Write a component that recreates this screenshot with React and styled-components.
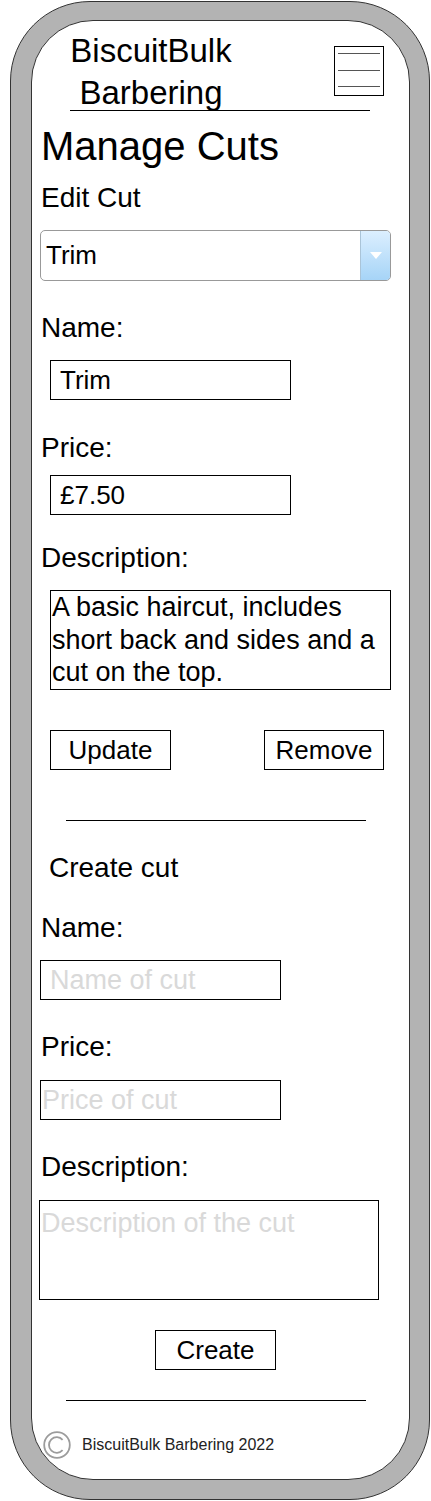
import React from "react";
import styled, { createGlobalStyle } from "styled-components";

const GlobalStyle = createGlobalStyle`
  body {
    margin: 0;
    background: #fff;
    font-family: "Liberation Sans", Arial, sans-serif;
    color: #000;
  }
`;

const Phone = styled.div`
  box-sizing: border-box;
  width: 420px;
  height: 1499px;
  margin: 1px 0 0 10px;
  padding: 18px 19px 19px 20px;
  background: #b3b3b3;
  border: 1px solid #333;
  border-radius: 80px;
  display: flex;
`;

const Screen = styled.div`
  flex: 1;
  box-sizing: border-box;
  background: #fff;
  border: 1px solid #333;
  border-radius: 62px;
  padding-left: 8px;
  display: flex;
  flex-direction: column;
  align-items: flex-start;
`;

const HeaderRow = styled.div`
  display: flex;
  justify-content: space-between;
  align-items: flex-start;
  width: 319px;
  height: 80px;
  margin: 9px 0 0 25px;
`;

const Brand = styled.div`
  width: 172px;
  text-align: center;
  font-size: 33px;
  line-height: 42px;
`;

const Menu = styled.div`
  box-sizing: border-box;
  width: 50px;
  height: 50px;
  margin-top: 16px;
  border: 1px solid #000;
  padding: 6px 3px 8px;
  display: flex;
  flex-direction: column;
  justify-content: space-between;
`;

const MenuLine = styled.span`
  display: block;
  height: 1px;
  background: #555;
`;

const Rule = styled.div`
  height: 1px;
  background: #000;
  width: ${(p) => p.$w || 300}px;
  margin: ${(p) => p.$mt || 0}px 0 0 ${(p) => p.$ml || 0}px;
`;

const PageTitle = styled.h1`
  margin: 13px 0 0 1px;
  font-size: 40px;
  line-height: 44px;
  font-weight: normal;
`;

const SectionTitle = styled.h2`
  margin: ${(p) => p.$mt}px 0 0 ${(p) => p.$ml}px;
  font-size: 28px;
  line-height: 32px;
  font-weight: normal;
`;

const Label = styled.label`
  display: block;
  margin: ${(p) => p.$mt}px 0 0 1px;
  font-size: 28px;
  line-height: 32px;
`;

const SelectBox = styled.div`
  box-sizing: border-box;
  display: flex;
  width: 351px;
  height: 51px;
  margin-top: 16px;
  border: 1px solid #999;
  border-radius: 5px;
  overflow: hidden;
`;

const SelectValue = styled.div`
  flex: 1;
  padding-left: 5px;
  font-size: 26px;
  line-height: 49px;
`;

const SelectArrow = styled.div`
  width: 29px;
  border-left: 1px solid #aac4d8;
  background: linear-gradient(#dcefff, #a6d4f7);
  display: flex;
  align-items: center;
  justify-content: center;

  &::after {
    content: "";
    border-left: 6px solid transparent;
    border-right: 6px solid transparent;
    border-top: 7px solid #fff;
  }
`;

const TextBox = styled.input`
  box-sizing: border-box;
  width: ${(p) => p.$w}px;
  height: 40px;
  margin: ${(p) => p.$mt}px 0 0 ${(p) => p.$ml}px;
  padding: 0 0 0 ${(p) => p.$pl}px;
  border: 1px solid #000;
  border-radius: 0;
  outline: none;
  font-family: inherit;
  font-size: ${(p) => p.$fs || 26}px;
  color: #000;
  background: #fff;

  &::placeholder {
    color: #d9d9d9;
  }
`;

const TextArea = styled.textarea`
  box-sizing: border-box;
  display: block;
  width: ${(p) => p.$w}px;
  height: 100px;
  margin: ${(p) => p.$mt}px 0 0 ${(p) => p.$ml}px;
  padding: ${(p) => p.$pt}px 0 0 1px;
  border: 1px solid #000;
  border-radius: 0;
  outline: none;
  resize: none;
  overflow: hidden;
  font-family: inherit;
  font-size: 27px;
  line-height: 32.5px;
  color: #000;
  background: #fff;

  &::placeholder {
    color: #d9d9d9;
  }
`;

const ButtonRow = styled.div`
  display: flex;
  justify-content: space-between;
  width: 334px;
  margin: 40px 0 0 10px;
`;

const Button = styled.button`
  box-sizing: border-box;
  width: ${(p) => p.$w}px;
  height: 40px;
  margin-left: ${(p) => p.$ml || 0}px;
  margin-top: ${(p) => p.$mt || 0}px;
  padding: 0;
  border: 1px solid #000;
  border-radius: 0;
  background: #fff;
  color: #000;
  font-family: inherit;
  font-size: 26px;
`;

const Footer = styled.footer`
  display: flex;
  align-items: center;
  height: 28px;
  margin: 30px 0 0 3px;
`;

const FooterText = styled.span`
  margin-left: 11px;
  font-size: 16px;
  line-height: 28px;
  color: #222;
`;

const CopyrightIcon = () => (
  <svg width="28" height="28" viewBox="0 0 28 28">
    <circle cx="14" cy="14" r="12.8" fill="none" stroke="#9c9c9c" strokeWidth="1.8" />
    <path
      d="M19.6 8.8 A7.8 7.8 0 1 0 19.6 19.2"
      fill="none"
      stroke="#9c9c9c"
      strokeWidth="1.8"
    />
  </svg>
);

export default function App() {
  return (
    <>
      <GlobalStyle />
      <Phone>
        <Screen>
          <HeaderRow>
            <Brand>
              BiscuitBulk
              <br />
              Barbering
            </Brand>
            <Menu>
              <MenuLine />
              <MenuLine />
              <MenuLine />
            </Menu>
          </HeaderRow>
          <Rule $ml={30} />

          <PageTitle>Manage Cuts</PageTitle>
          <SectionTitle $mt={14} $ml={1}>Edit Cut</SectionTitle>
          <SelectBox>
            <SelectValue>Trim</SelectValue>
            <SelectArrow />
          </SelectBox>

          <Label $mt={31}>Name:</Label>
          <TextBox $w={241} $mt={16} $ml={10} $pl={9} defaultValue="Trim" />
          <Label $mt={32}>Price:</Label>
          <TextBox $w={241} $mt={11} $ml={10} $pl={9} defaultValue="£7.50" />
          <Label $mt={27}>Description:</Label>
          <TextArea
            $w={341}
            $mt={16}
            $ml={10}
            $pt={0}
            defaultValue="A basic haircut, includes short back and sides and a cut on the top."
          />

          <ButtonRow>
            <Button $w={121}>Update</Button>
            <Button $w={120}>Remove</Button>
          </ButtonRow>

          <Rule $mt={50} $ml={26} />

          <SectionTitle $mt={31} $ml={9}>Create cut</SectionTitle>
          <Label $mt={28}>Name:</Label>
          <TextBox $w={241} $mt={16} $ml={0} $pl={9} $fs={27} placeholder="Name of cut" />
          <Label $mt={31}>Price:</Label>
          <TextBox $w={241} $mt={17} $ml={0} $pl={1} $fs={27} placeholder="Price of cut" />
          <Label $mt={31}>Description:</Label>
          <TextArea
            $w={340}
            $mt={17}
            $ml={-1}
            $pt={6}
            placeholder="Description of the cut"
          />

          <Button $w={121} $mt={30} $ml={115}>Create</Button>

          <Rule $mt={30} $ml={26} />

          <Footer>
            <CopyrightIcon />
            <FooterText>BiscuitBulk Barbering 2022</FooterText>
          </Footer>
        </Screen>
      </Phone>
    </>
  );
}
